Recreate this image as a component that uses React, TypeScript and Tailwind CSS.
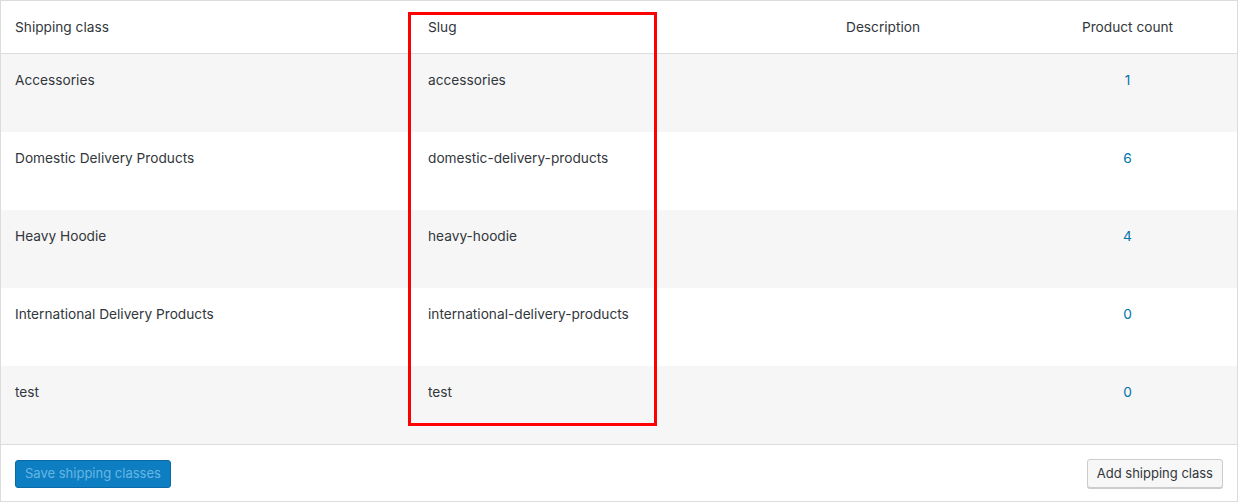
const rows = [
  { name: "Accessories", slug: "accessories", count: 1 },
  { name: "Domestic Delivery Products", slug: "domestic-delivery-products", count: 6 },
  { name: "Heavy Hoodie", slug: "heavy-hoodie", count: 4 },
  { name: "International Delivery Products", slug: "international-delivery-products", count: 0 },
  { name: "test", slug: "test", count: 0 },
];

const cols = "grid grid-cols-[413px_418px_201px_1fr]";

export default function App() {
  return (
    <div className="relative w-[1238px] h-[502px] bg-white text-[13.7px] text-[#32373c] font-['Inter','Liberation_Sans',sans-serif]">
      <div className="border border-[#dcdcde] h-full flex flex-col">
        {/* Header */}
        <div className={`${cols} h-[53px] items-center border-b border-[#dcdcde] shrink-0`}>
          <div className="pl-[14px]">Shipping class</div>
          <div className="pl-[14px]">Slug</div>
          <div className="pl-[14px]">Description</div>
          <div className="pr-[15px] text-center">Product count</div>
        </div>

        {/* Rows */}
        {rows.map((r, i) => (
          <div
            key={r.slug}
            className={`${cols} h-[78px] pt-[16px] shrink-0 ${i % 2 === 0 ? "bg-[#f6f6f6]" : "bg-white"}`}
          >
            <div className="pl-[14px] leading-5">{r.name}</div>
            <div className="pl-[14px] leading-5">{r.slug}</div>
            <div className="pl-[14px] leading-5"></div>
            <div className="pr-[15px] text-center leading-5">
              <a className="text-[#0073aa]">{r.count}</a>
            </div>
          </div>
        ))}

        {/* Footer */}
        <div className="flex-1 border-t border-[#dcdcde] flex items-center justify-between px-[14px] pt-[1px]">
          <button className="h-[28px] px-[9px] rounded-[3px] bg-[#0e7ec2] border border-[#0b6aa5] text-[#66b6e4] text-[13px]">
            Save shipping classes
          </button>
          <button className="h-[29px] px-[9px] rounded-[3px] bg-[#f7f7f7] border border-[#cccccc] shadow-[0_1px_0_#cccccc] text-[#32373c] text-[13px]">
            Add shipping class
          </button>
        </div>
      </div>

      {/* Highlight box */}
      <div className="absolute left-[408px] top-[12px] w-[249px] h-[414px] border-[3px] border-[#ff0000] pointer-events-none" />
    </div>
  );
}
